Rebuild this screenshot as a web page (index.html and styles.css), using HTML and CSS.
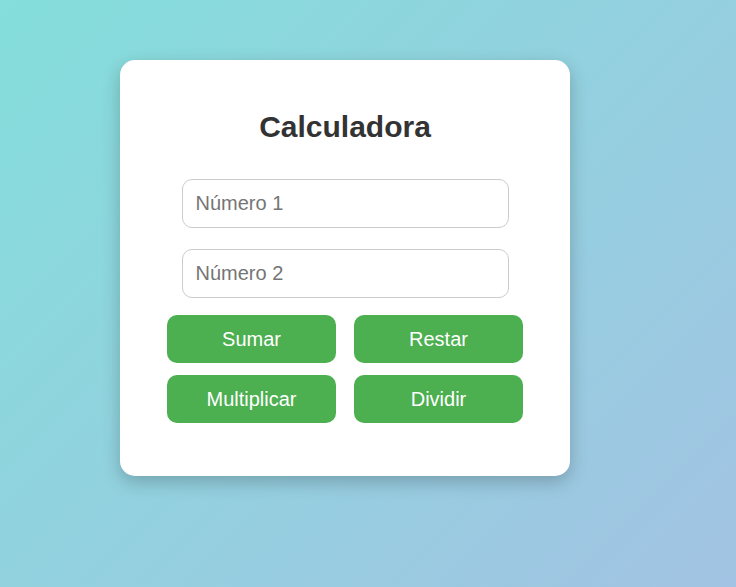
FILE: index.html
```html
<!DOCTYPE html>
<html lang="es">
<head>
<meta charset="UTF-8">
<title>Calculadora</title>
<link rel="stylesheet" href="styles.css">
</head>
<body>
<div class="card">
  <h1 class="title">Calculadora</h1>
  <input class="field" type="number" placeholder="Número 1">
  <input class="field field-second" type="number" placeholder="Número 2">
  <div class="buttons">
    <button class="btn">Sumar</button>
    <button class="btn">Restar</button>
    <button class="btn">Multiplicar</button>
    <button class="btn">Dividir</button>
  </div>
</div>
</body>
</html>
```
FILE: styles.css
```css
html, body {
  margin: 0;
  height: 100%;
}
body {
  background: linear-gradient(135deg, #84dedb 0%, #a2c3e3 100%);
  font-family: "Liberation Sans", Arial, sans-serif;
  padding: 60px 0 0 120px;
  box-sizing: border-box;
}
.card {
  width: 450px;
  box-sizing: border-box;
  background: #fff;
  border-radius: 15px;
  box-shadow: 0 6px 18px rgba(0, 0, 0, 0.22);
  padding: 50px 0 53px;
  display: flex;
  flex-direction: column;
  align-items: center;
}
.title {
  margin: 0 0 35px;
  font-size: 30px;
  line-height: 34px;
  font-weight: bold;
  color: #333;
}
.field {
  width: 327px;
  height: 49px;
  box-sizing: border-box;
  border: 1px solid #ccc;
  border-radius: 10px;
  padding: 0 13px;
  font-family: "Liberation Sans", Arial, sans-serif;
  font-size: 20px;
  color: #333;
  outline: none;
}
.field::placeholder {
  color: #757575;
}
.field-second {
  margin-top: 21px;
}
.buttons {
  margin-top: 17px;
  display: grid;
  grid-template-columns: 169px 169px;
  gap: 12px 18px;
}
.btn {
  height: 48px;
  border: none;
  border-radius: 10px;
  background: #4caf50;
  color: #fff;
  font-family: "Liberation Sans", Arial, sans-serif;
  font-size: 20px;
  cursor: pointer;
}
```
